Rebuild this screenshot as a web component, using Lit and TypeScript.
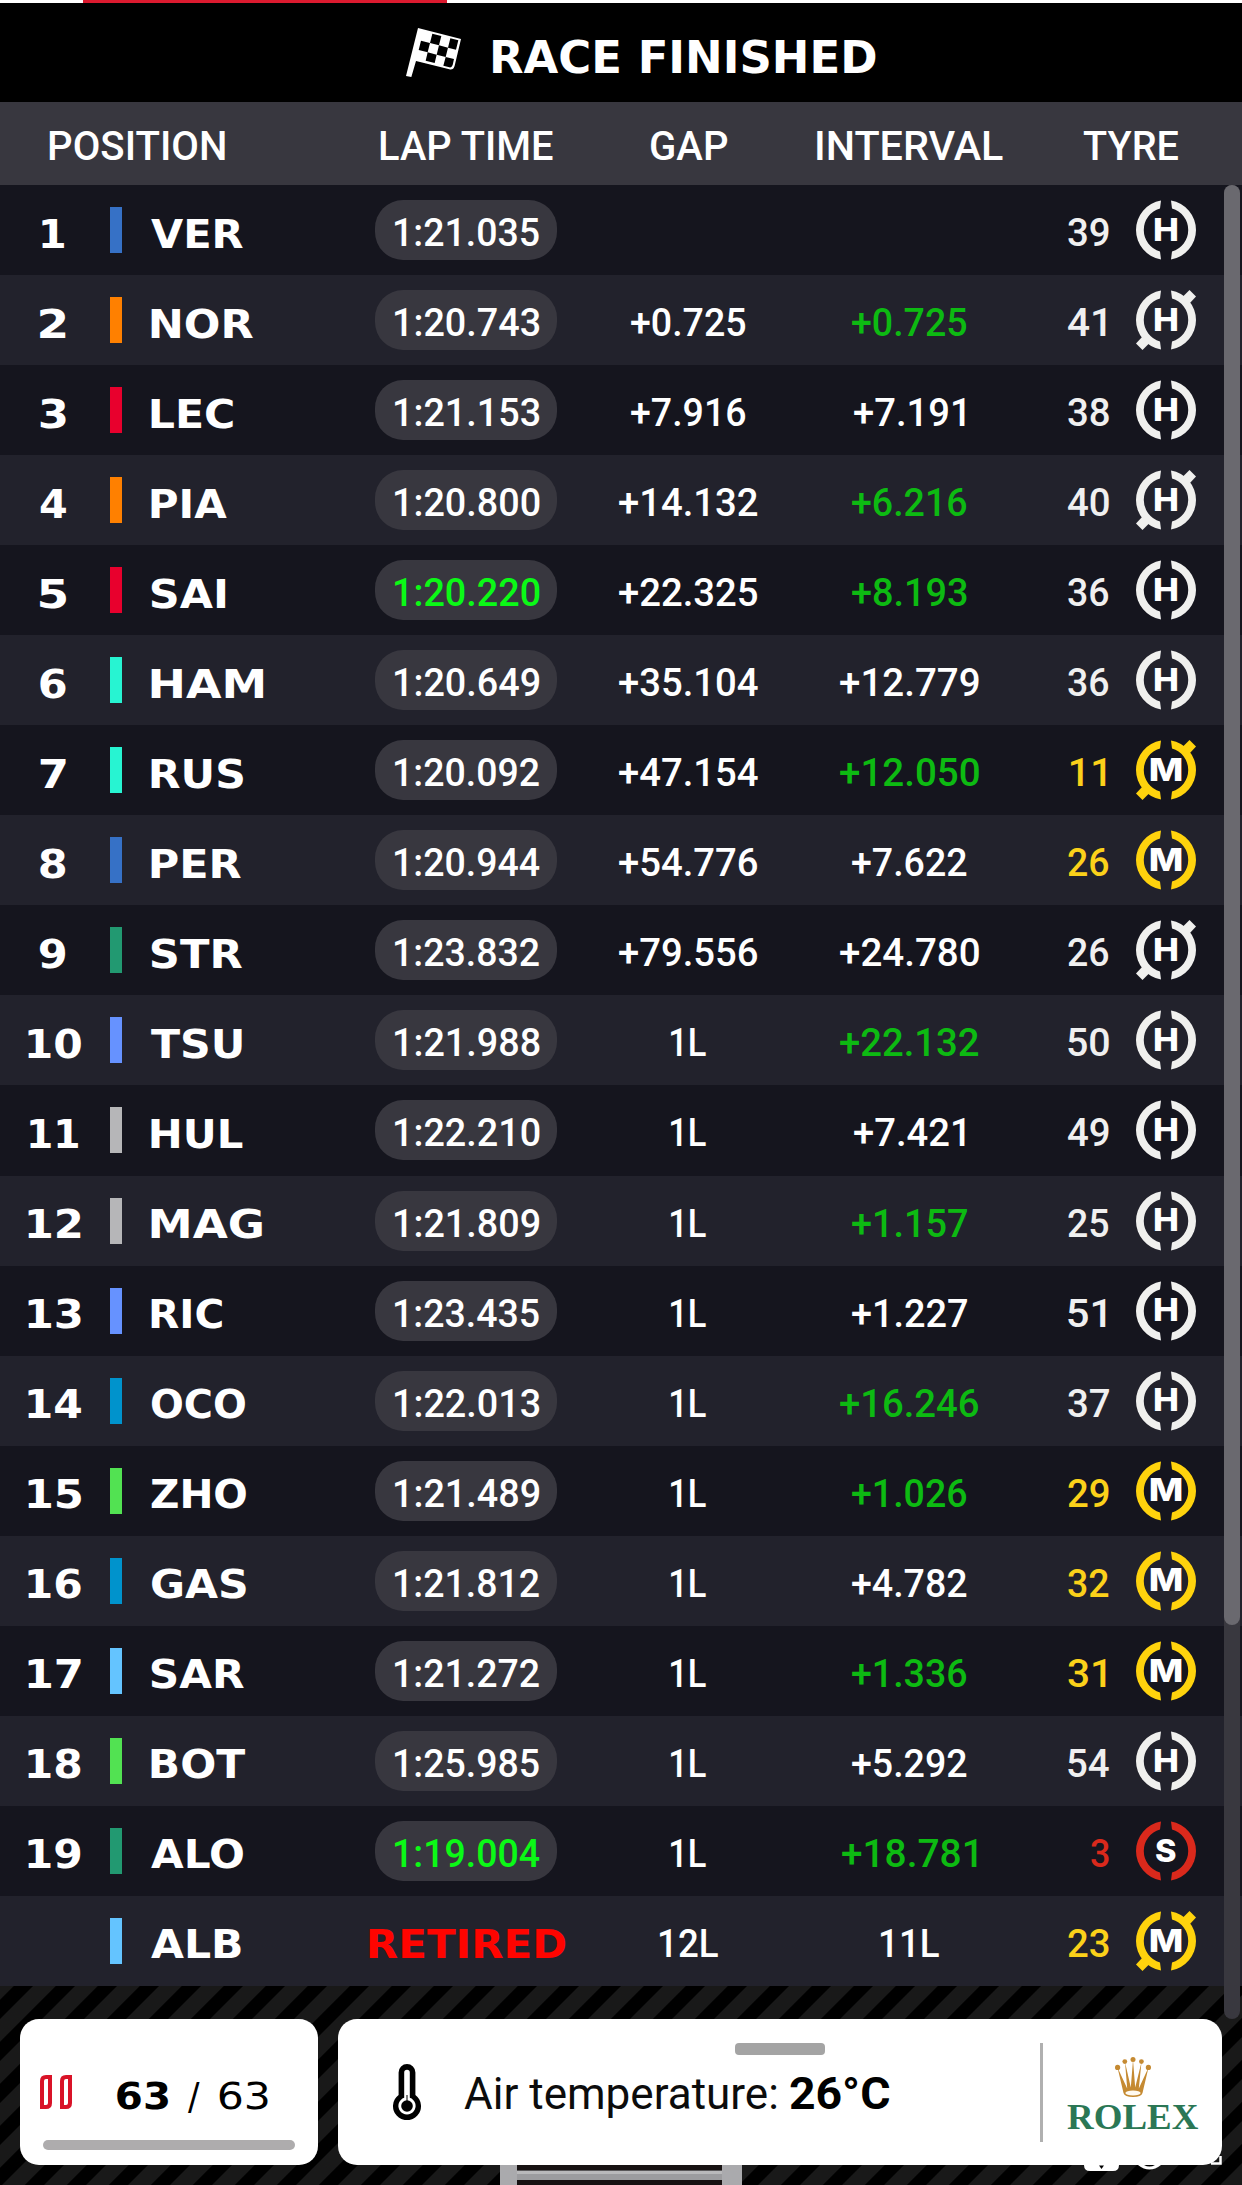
import { LitElement, html, svg, css, nothing } from "lit";
import { customElement, property, state } from "lit/decorators.js";
import { classMap } from "lit/directives/class-map.js";
import { styleMap } from "lit/directives/style-map.js";

type Compound = "H" | "M" | "S";

interface Driver {
  pos: string;
  code: string;
  nameWidth: number;
  team: string;
  lap: string;
  best?: boolean;
  gap: string;
  interval: string;
  faster?: boolean;
  age: string;
  tyre: Compound;
  used?: boolean;
}

const TEAM: Record<string, string> = {
  redbull: "#3671c6",
  mclaren: "#ff8000",
  ferrari: "#e8002d",
  mercedes: "#27f4d2",
  aston: "#229971",
  rb: "#6692ff",
  haas: "#b6b6b8",
  alpine: "#0093cc",
  sauber: "#52e252",
  williams: "#64c4ff",
};

const d = (
  pos: string, code: string, nameWidth: number, team: string, lap: string,
  gap: string, interval: string, age: string, tyre: Compound, flags = "",
): Driver => ({
  pos, code, nameWidth, team, lap, gap, interval, age, tyre,
  best: flags.includes("b"),
  faster: flags.includes("f"),
  used: flags.includes("u"),
});

const DRIVERS: Driver[] = [
  d("1", "VER", 92, "redbull", "1:21.035", "", "", "39", "H"),
  d("2", "NOR", 102, "mclaren", "1:20.743", "+0.725", "+0.725", "41", "H", "fu"),
  d("3", "LEC", 82, "ferrari", "1:21.153", "+7.916", "+7.191", "38", "H"),
  d("4", "PIA", 76, "mclaren", "1:20.800", "+14.132", "+6.216", "40", "H", "fu"),
  d("5", "SAI", 75, "ferrari", "1:20.220", "+22.325", "+8.193", "36", "H", "bf"),
  d("6", "HAM", 112, "mercedes", "1:20.649", "+35.104", "+12.779", "36", "H"),
  d("7", "RUS", 92, "mercedes", "1:20.092", "+47.154", "+12.050", "11", "M", "fu"),
  d("8", "PER", 90, "redbull", "1:20.944", "+54.776", "+7.622", "26", "M"),
  d("9", "STR", 91, "aston", "1:23.832", "+79.556", "+24.780", "26", "H", "u"),
  d("10", "TSU", 91, "rb", "1:21.988", "1L", "+22.132", "50", "H", "f"),
  d("11", "HUL", 92, "haas", "1:22.210", "1L", "+7.421", "49", "H"),
  d("12", "MAG", 111, "haas", "1:21.809", "1L", "+1.157", "25", "H", "f"),
  d("13", "RIC", 71, "rb", "1:23.435", "1L", "+1.227", "51", "H"),
  d("14", "OCO", 94, "alpine", "1:22.013", "1L", "+16.246", "37", "H", "f"),
  d("15", "ZHO", 95, "sauber", "1:21.489", "1L", "+1.026", "29", "M", "f"),
  d("16", "GAS", 95, "alpine", "1:21.812", "1L", "+4.782", "32", "M"),
  d("17", "SAR", 93, "williams", "1:21.272", "1L", "+1.336", "31", "M", "f"),
  d("18", "BOT", 94, "sauber", "1:25.985", "1L", "+5.292", "54", "H"),
  d("19", "ALO", 92, "aston", "1:19.004", "1L", "+18.781", "3", "S", "bf"),
  d("", "ALB", 90, "williams", "RETIRED", "12L", "11L", "23", "M", "u"),
];

const FACES: Record<string, { family: string; weight: number; cap: number }> = {
  display: { family: '"DejaVu Sans", sans-serif', weight: 700, cap: 0.729 },
  displayLight: { family: '"DejaVu Sans", sans-serif', weight: 400, cap: 0.729 },
  letter: { family: "Inter, sans-serif", weight: 800, cap: 0.727 },
  text: { family: "Roboto, sans-serif", weight: 500, cap: 0.711 },
  regular: { family: "Roboto, sans-serif", weight: 400, cap: 0.711 },
  bold: { family: "Roboto, sans-serif", weight: 700, cap: 0.711 },
  serif: { family: '"Liberation Serif", serif', weight: 700, cap: 0.655 },
};

const measurer = document.createElement("canvas").getContext("2d")!;

/** A line of text whose box is its cap height by its ink width. */
@customElement("fit-text")
class FitText extends LitElement {
  @property() text = "";
  @property() face = "text";
  @property({ type: Number }) cap = 27;
  @property({ type: Number }) width = 100;

  static styles = css`
    :host { display: inline-block; flex: none; vertical-align: top; }
    .box { display: block; white-space: pre; }
    .line { display: inline-block; transform-origin: 0 0; vertical-align: top; }
  `;

  render() {
    const f = FACES[this.face];
    const size = this.cap / f.cap;
    measurer.font = `${f.weight} ${size}px ${f.family}`;
    const m = measurer.measureText(this.text);
    const ink = m.actualBoundingBoxRight + m.actualBoundingBoxLeft;
    const sx = ink ? this.width / ink : 1;
    const dx = m.actualBoundingBoxLeft * sx;
    const dy = this.cap / 2 - (m.fontBoundingBoxAscent - m.fontBoundingBoxDescent) / 2;
    const box = { width: `${this.width}px`, height: `${this.cap}px` };
    const line = {
      fontFamily: f.family,
      fontWeight: String(f.weight),
      fontSize: `${size}px`,
      lineHeight: `${this.cap}px`,
      transform: `translate(${dx}px, ${dy}px) scaleX(${sx})`,
    };
    return html`<span class="box" style=${styleMap(box)}><span class="line" style=${styleMap(line)}>${this.text}</span></span>`;
  }
}

@customElement("tyre-badge")
class TyreBadge extends LitElement {
  @property() compound: Compound = "H";
  @property({ type: Boolean }) used = false;

  static styles = css`
    :host { display: block; width: 60px; height: 60px; }
    .stack { display: grid; place-items: center; width: 60px; height: 60px; }
    .stack > * { grid-area: 1 / 1; }
    .H { fill: #f0f0ee; }
    .M { fill: #ffd30d; }
    .S { fill: #da291c; }
    .letter { color: #fff; }
  `;

  render() {
    const w = { H: 23.5, M: 32, S: 20 }[this.compound];
    return html`
      <div class="stack">
        <svg class=${this.compound} width="60" height="60" viewBox="0 0 60 60">
          <path d="M25 .42A30 30 0 0 0 25 59.58L24 51.38A22.2 22.2 0 0 1 24 8.62Z" />
          <path d="M35 .42A30 30 0 0 1 35 59.58L36 51.38A22.2 22.2 0 0 0 36 8.62Z" />
          ${this.used
            ? svg`<path d="M53.500 0L60 6.500L53 14L46 7.500Z" /><path d="M6.500 60L0 53.500L7 46L14 52.500Z" />`
            : nothing}
        </svg>
        <fit-text class="letter" face="letter" cap="22.500" width=${w} text=${this.compound}></fit-text>
      </div>
    `;
  }
}

@customElement("timing-row")
class TimingRow extends LitElement {
  @property({ attribute: false }) driver!: Driver;

  static styles = css`
    :host { display: block; color: #fff; }
    .row {
      display: grid;
      grid-template-columns: 104px 46px 199px 234px 210px 232px 84px 27px 60px;
      align-items: start;
      height: 100%;
    }
    .pos, .lap, .gap, .interval { display: flex; justify-content: center; }
    .pos, .name { padding-top: 33.5px; padding-left: 1px; }
    .pos.two { padding-left: 4px; }
    .bar { width: 12px; height: 46px; margin: 22px 0 0 6px; }
    .lap { padding-top: 15px; }
    .pill {
      display: flex;
      justify-content: center;
      box-sizing: border-box;
      width: 182px;
      height: 60px;
      padding: 19px 0 0 3px;
      border-radius: 28px;
      background: #38373f;
    }
    .best { color: #0bf916; }
    .retired { color: #ff0400; padding: 18.5px 0 0 1px; }
    .gap, .interval { padding-top: 34px; padding-left: 1px; }
    .faster { color: #0dba12; }
    .age { display: flex; justify-content: flex-end; padding-top: 34px; }
    .age.one { padding-right: 3px; }
    .age.H { color: #f0f0f0; }
    .age.M { color: #fbd11a; }
    .age.S { color: #da291c; }
    .tyre { grid-column: 9; padding-top: 15px; }
  `;

  private delta(text: string) {
    const width = { 0: 0, 2: 35, 3: 58, 6: 115, 7: 139 }[text.length] ?? 0;
    const trimmed = text.length > 5 && text.endsWith("1") ? width - 4 : width;
    return text ? html`<fit-text cap="27" width=${trimmed} text=${text}></fit-text>` : nothing;
  }

  render() {
    const r = this.driver;
    const posWidth = r.pos === "1" ? 22 : r.pos.length === 2 ? (r.pos === "11" ? 48 : 53) : 26;
    const one = r.age.endsWith("1");
    const ageWidth = r.age.length === 1 ? 18 : r.age === "11" ? 35 : one ? 38 : 41;
    return html`
      <div class="row">
        <div class=${classMap({ pos: true, two: r.pos.length === 2 })}>
          ${r.pos
            ? html`<fit-text face="display" cap="29" width=${posWidth} text=${r.pos}></fit-text>`
            : nothing}
        </div>
        <div class="bar" style=${styleMap({ background: TEAM[r.team] })}></div>
        <div class="name">
          <fit-text face="display" cap="29" width=${r.nameWidth} text=${r.code}></fit-text>
        </div>
        <div class="lap">
          ${r.lap === "RETIRED"
            ? html`<div class="retired"><fit-text face="display" cap="29" width="196" text="RETIRED"></fit-text></div>`
            : html`<div class=${classMap({ pill: true, best: !!r.best })}>
                <fit-text cap="27" width="144.500" text=${r.lap}></fit-text>
              </div>`}
        </div>
        <div class="gap">${this.delta(r.gap)}</div>
        <div class=${classMap({ interval: true, faster: !!r.faster })}>${this.delta(r.interval)}</div>
        <div class=${classMap({ age: true, one, [r.tyre]: true })}>
          <fit-text cap="27" width=${ageWidth} text=${r.age}></fit-text>
        </div>
        <div class="tyre"><tyre-badge compound=${r.tyre} ?used=${r.used}></tyre-badge></div>
      </div>
    `;
  }
}

@customElement("status-footer")
class StatusFooter extends LitElement {
  static styles = css`
    :host { display: block; }
    .footer {
      position: relative;
      box-sizing: border-box;
      height: 199px;
      padding: 33px 20px 20px;
      display: flex;
      gap: 20px;
      overflow: hidden;
      background: repeating-linear-gradient(-45deg, #191919 0 14.8px, #000 16.2px 28.6px, #191919 29.7px);
    }
    .card { height: 146px; border-radius: 19px; background: #fff; color: #000; }
    .laps { width: 298px; display: flex; flex-direction: column; box-sizing: border-box; padding: 56px 20px 0; }
    .count { display: flex; align-items: flex-start; height: 65px; }
    .current { margin: 7px 0 0 45px; }
    .slash { margin: 7px 0 0 20px; }
    .total { margin: 7px 0 0 19px; }
    .progress { height: 10px; margin: 0 3px; border-radius: 6px; background: #aeacad; }
    .weather { width: 884px; display: grid; grid-template-columns: 55px 71px 326px 250px 182px; align-items: start; }
    .thermo { grid-column: 2; margin-top: 45px; }
    .label { margin-top: 58px; color: #0c0c0c; }
    .value { margin-top: 58px; }
    .sponsor {
      box-sizing: border-box;
      height: 99px;
      margin-top: 24px;
      padding: 14px 0 0 24px;
      border-left: 3px solid #b0b0b0;
      display: flex;
      flex-direction: column;
      gap: 9px;
      color: #2b7755;
    }
    .crown { margin-left: 48px; }
    .handle { position: absolute; left: 735px; top: 57px; width: 90px; height: 12px; border-radius: 4px; background: #a4a4a4; }
    .scene { position: absolute; left: 0; top: 165px; }
  `;

  render() {
    return html`
      <div class="footer">
        <div class="card laps">
          <div class="count">
            <svg width="32" height="34" viewBox="0 0 32 34" fill="none" stroke="#d91328" stroke-width="4">
              <path d="M2 32V6Q2 2 6 2H10V28Q10 32 6 32Z" />
              <path d="M22 32V6Q22 2 26 2H30V28Q30 32 26 32Z" />
            </svg>
            <fit-text class="current" face="display" cap="27" width="51" text="63"></fit-text>
            <fit-text class="slash" face="displayLight" cap="27" width="12" text="/"></fit-text>
            <fit-text class="total" face="displayLight" cap="27" width="49" text="63"></fit-text>
          </div>
          <div class="progress"></div>
        </div>
        <div class="card weather">
          <svg class="thermo" width="28" height="56" viewBox="0 0 28 56">
            <path d="M5.6 8.4a8.4 8.4 0 0 1 16.8 0V31A14 14 0 1 1 5.6 31Z" />
            <path d="M11.2 8.6a2.8 2.8 0 0 1 5.6 0V33.8A8.6 8.6 0 1 1 11.2 33.8Z" fill="#fff" />
            <circle cx="14" cy="42" r="5.8" />
            <path d="M13.5 31h1v7h-1Z" />
          </svg>
          <fit-text class="label" face="regular" cap="32" width="312" text="Air temperature:"></fit-text>
          <fit-text class="value" face="bold" cap="32" width="100" text="26°C"></fit-text>
          <div class="sponsor">
            <svg class="crown" width="36" height="40" viewBox="0 0 36 40" fill="#c58a32">
              <path d="M2.5 10.5L12.2 31.5L10 5L15.8 30.5L18 3L20.2 30.5L26.5 5L23.8 31.5L33.5 10.5L27.5 36Q26.5 40 18 40T8.5 36Z" />
              <circle cx="2.6" cy="10.4" r="2.6" /><circle cx="9.8" cy="4.6" r="2.4" />
              <circle cx="18" cy="2.6" r="2.5" /><circle cx="26.4" cy="4.6" r="2.4" />
              <circle cx="33.4" cy="10.4" r="2.6" />
              <ellipse cx="18" cy="36" rx="7.6" ry="2.5" fill="#fffaf0" />
            </svg>
            <fit-text face="serif" cap="23" width="131" text="ROLEX"></fit-text>
          </div>
        </div>
        <svg class="scene" width="1242" height="34" viewBox="0 0 1242 34">
          <path d="M500 14H742V34H500Z" fill="#171212" />
          <path d="M517 19.500H724V29H517Z" fill="#9c9c9f" />
          <path d="M517 20H724V23H517Z" fill="#b9b9bb" />
          <path d="M500 14H517V34H500ZM722 14H742V34H722Z" fill="#aaaaad" />
          <path d="M1084 12H1119V14Q1119 20 1113 20H1090Q1084 20 1084 14Z" fill="#fff" />
          <path d="M1099 14.500H1104L1101.500 18Z" />
          <path d="M1138 14Q1149.500 23 1161 14Z" fill="#fff" />
          <path d="M1144 14Q1149.500 17 1155 14Z" />
          <path d="M1211 12.500H1220.500V5" stroke="#fff" stroke-width="2.500" fill="none" />
        </svg>
        <div class="handle"></div>
      </div>
    `;
  }
}

@customElement("app-root")
class AppRoot extends LitElement {
  @state() private drivers = DRIVERS;

  static styles = css`
    :host { display: block; }
    .page { position: relative; width: 1242px; height: 2185px; overflow: hidden; background: #000; }
    .tabs { height: 3px; padding-left: 83px; background: #fff; }
    .tab { width: 364px; height: 3px; background: #dc1a2f; }
    .title { display: flex; align-items: flex-start; height: 99px; box-sizing: border-box; padding: 25px 0 0 406px; background: #000; color: #fff; }
    .title fit-text { margin: 13px 0 0 31.5px; }
    .head {
      display: grid;
      grid-template-columns: 349px 234px 210px 232px 1fr;
      height: 83px;
      box-sizing: border-box;
      padding: 28.5px 0 0 1px;
      justify-items: center;
      background: #38373f;
      color: #fff;
    }
    .head .first { justify-self: start; margin-left: 49px; }
    .head .last { justify-self: start; margin-left: 57px; }
    timing-row { height: 90.05px; background: #15151e; }
    timing-row:nth-child(even) { background: #22222c; }
    .track { position: absolute; left: 1224px; top: 185px; width: 16px; height: 1834px; border-radius: 8px; background: #39383f; }
    .thumb { width: 16px; height: 1440px; border-radius: 8px; background: #6a696f; }
  `;

  render() {
    return html`
      <div class="page">
        <div class="tabs"><div class="tab"></div></div>
        <div class="title">
          <svg width="55" height="49" viewBox="48 84 165 147">
            <path fill="#fff" d="M84 84L213 117L194 197Q190 211 178 208L78 183L64 231L48 228Z" />
            <path d="M127 101l27 7l-7 28l-27 -7ZM181 115l24 6l-7 28l-24 -6ZM93 122l27 7l-7 28l-27 -7ZM147 136l27 7l-7 28l-27 -7ZM113 157l27 7l-6 25l-27 -7ZM167 171l25 6l-4 18q-3 9 -10 7l-18 -5Z" />
          </svg>
          <fit-text face="display" cap="32" width="383" text="RACE FINISHED"></fit-text>
        </div>
        <div class="head">
          <fit-text class="first" cap="29.500" face="text" width="175" text="POSITION"></fit-text>
          <fit-text cap="29.500" face="text" width="173" text="LAP TIME"></fit-text>
          <fit-text cap="29.500" face="text" width="76" text="GAP"></fit-text>
          <fit-text cap="29.500" face="text" width="186" text="INTERVAL"></fit-text>
          <fit-text class="last" cap="29.500" face="text" width="95.500" text="TYRE"></fit-text>
        </div>
        <div class="rows">
          ${this.drivers.map((r) => html`<timing-row .driver=${r}></timing-row>`)}
        </div>
        <status-footer></status-footer>
        <div class="track"><div class="thumb"></div></div>
      </div>
    `;
  }
}
